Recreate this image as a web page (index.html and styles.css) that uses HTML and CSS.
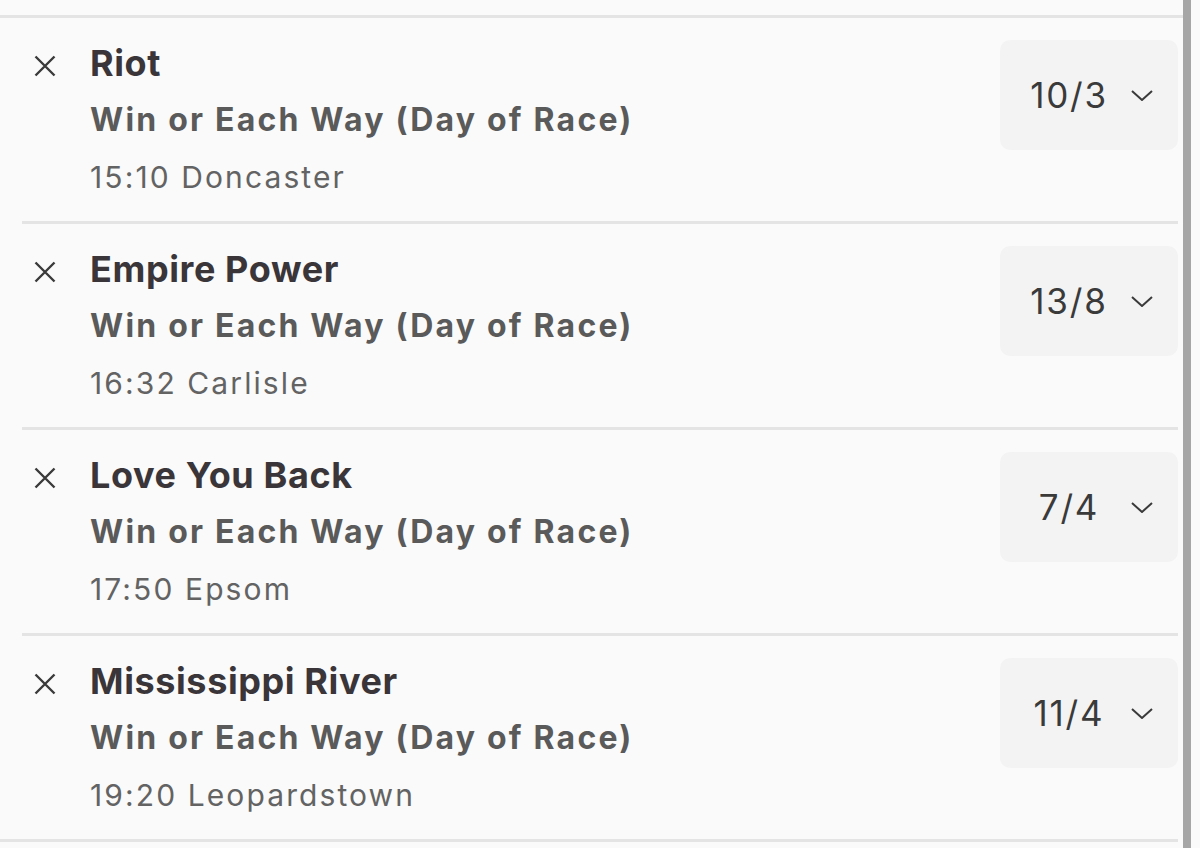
FILE: index.html
```html
<!DOCTYPE html>
<html>
    <head>
        <meta charset="utf-8" />
        <title>Bet Slip</title>
        <link rel="stylesheet" href="styles.css">
    </head>

    <body>
        <div class="page">
            <div class="slip">
                <div class="leg">
                    <button class="remove" aria-label="Remove">
                        <svg viewBox="0 0 22 22" width="22" height="22"><path d="M1.5 1.5 L20.5 20.5 M20.5 1.5 L1.5 20.5" /></svg>
                    </button>
                    <div class="details">
                        <div class="selection">Riot</div>
                        <div class="market">Win or Each Way (Day of Race)</div>
                        <div class="event">15:10 Doncaster</div>
                    </div>
                    <div class="odds">
                        <span class="price">10/3</span>
                        <svg class="chevron" viewBox="0 0 22 11" width="22" height="11"><path d="M1 1 L11 10 L21 1" /></svg>
                    </div>
                </div>
                <div class="leg">
                    <button class="remove" aria-label="Remove">
                        <svg viewBox="0 0 22 22" width="22" height="22"><path d="M1.5 1.5 L20.5 20.5 M20.5 1.5 L1.5 20.5" /></svg>
                    </button>
                    <div class="details">
                        <div class="selection">Empire Power</div>
                        <div class="market">Win or Each Way (Day of Race)</div>
                        <div class="event">16:32 Carlisle</div>
                    </div>
                    <div class="odds">
                        <span class="price">13/8</span>
                        <svg class="chevron" viewBox="0 0 22 11" width="22" height="11"><path d="M1 1 L11 10 L21 1" /></svg>
                    </div>
                </div>
                <div class="leg">
                    <button class="remove" aria-label="Remove">
                        <svg viewBox="0 0 22 22" width="22" height="22"><path d="M1.5 1.5 L20.5 20.5 M20.5 1.5 L1.5 20.5" /></svg>
                    </button>
                    <div class="details">
                        <div class="selection">Love You Back</div>
                        <div class="market">Win or Each Way (Day of Race)</div>
                        <div class="event">17:50 Epsom</div>
                    </div>
                    <div class="odds">
                        <span class="price">7/4</span>
                        <svg class="chevron" viewBox="0 0 22 11" width="22" height="11"><path d="M1 1 L11 10 L21 1" /></svg>
                    </div>
                </div>
                <div class="leg last">
                    <button class="remove" aria-label="Remove">
                        <svg viewBox="0 0 22 22" width="22" height="22"><path d="M1.5 1.5 L20.5 20.5 M20.5 1.5 L1.5 20.5" /></svg>
                    </button>
                    <div class="details">
                        <div class="selection">Mississippi River</div>
                        <div class="market">Win or Each Way (Day of Race)</div>
                        <div class="event">19:20 Leopardstown</div>
                    </div>
                    <div class="odds">
                        <span class="price">11/4</span>
                        <svg class="chevron" viewBox="0 0 22 11" width="22" height="11"><path d="M1 1 L11 10 L21 1" /></svg>
                    </div>
                </div>
            </div>
            <div class="scrollbar"></div>
        </div>
    </body>
</html>
```

FILE: styles.css
```css
body {
    margin: 0px;
    padding: 0px;
    background-color: #fafafa;
    font-family: Inter, 'Noto Sans', sans-serif;
}

.page {
    display: flex;
    height: 848px;
    overflow: hidden;
}

.slip {
    width: 1183px;
    padding-top: 15px;
}

.slip::before {
    content: '';
    display: block;
    height: 3px;
    background-color: #e4e4e4;
}

.scrollbar {
    width: 8px;
    background-color: #a6a6a6;
}

.leg {
    display: flex;
    align-items: flex-start;
    margin-left: 22px;
    margin-right: 5px;
    padding-top: 17px;
    height: 186px;
    border-bottom: 3px solid #e4e4e4;
}

.leg.last {
    margin-left: 0px;
    padding-left: 22px;
}

.remove {
    border: 0px;
    background: none;
    padding: 0px;
    margin: 20px 34px 0px 12px;
    width: 22px;
    height: 22px;
    cursor: pointer;

    svg {
        display: block;
        fill: none;
        stroke: #3a3a3a;
        stroke-width: 2.4;
    }
}

.details {
    flex: 1;
    line-height: 56px;
}

.selection {
    font-size: 36px;
    font-weight: 700;
    letter-spacing: 0.6px;
    color: #3a3538;
}

.market {
    font-size: 32px;
    font-weight: 700;
    letter-spacing: 2.2px;
    line-height: 58px;
    color: #5a5a5a;
}

.event {
    font-size: 30px;
    letter-spacing: 2.1px;
    color: #636363;
}

.odds {
    display: flex;
    align-items: center;
    box-sizing: border-box;
    width: 178px;
    height: 110px;
    margin-top: 5px;
    padding: 0px 25px 0px 18px;
    border-radius: 10px;
    background-color: #f3f3f3;
}

.price {
    width: 102px;
    margin-right: 11px;
    text-align: center;
    font-size: 35px;
    letter-spacing: 1.8px;
    color: #3a3a3a;
}

.chevron {
    fill: none;
    stroke: #3a3a3a;
    stroke-width: 2;
}
```
